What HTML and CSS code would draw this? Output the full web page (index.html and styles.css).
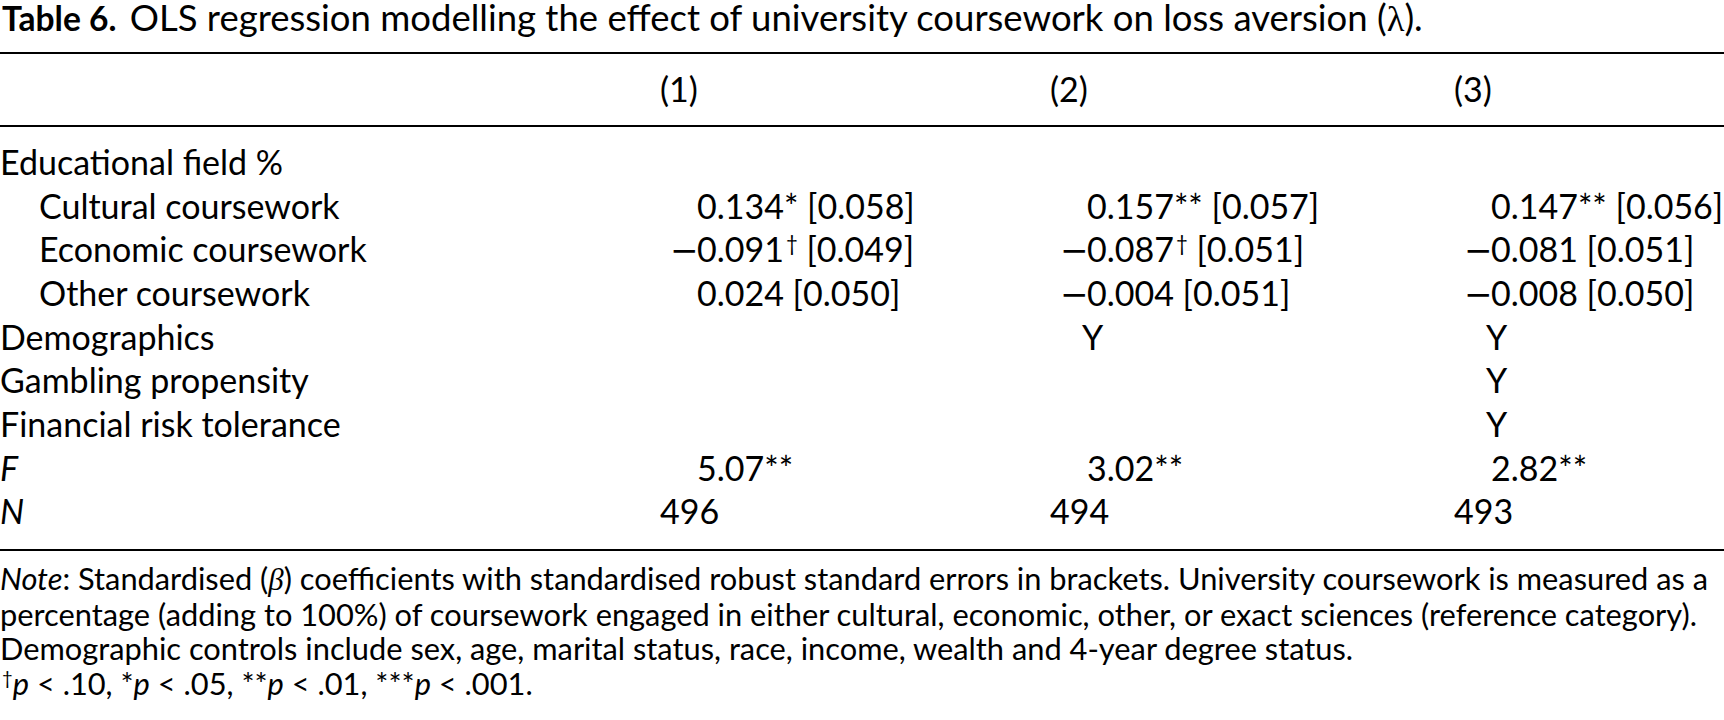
FILE: index.html
```html
<!DOCTYPE html>
<html lang="en">
<head>
<meta charset="utf-8">
<title>Table 6</title>
<link rel="stylesheet" href="styles.css">
</head>
<body>
<div class="caption"><b class="tno">Table 6.</b> OLS regression modelling the effect of university coursework on loss aversion (<span class="greek">λ</span>).</div>

<div class="table">
  <div class="row head">
    <div class="lab"></div>
    <div class="cell">(1)</div>
    <div class="cell">(2)</div>
    <div class="cell c3">(3)</div>
  </div>
  <div class="body">
    <div class="row">
      <div class="lab">Educational field %</div>
      <div class="cell"></div><div class="cell"></div><div class="cell c3"></div>
    </div>
    <div class="row">
      <div class="lab sub">Cultural coursework</div>
      <div class="cell num"><span class="sign"></span>0.134<span class="star">*</span> [0.058]</div>
      <div class="cell num"><span class="sign"></span>0.157<span class="star">**</span> [0.057]</div>
      <div class="cell num c3"><span class="sign"></span>0.147<span class="star">**</span> [0.056]</div>
    </div>
    <div class="row">
      <div class="lab sub">Economic coursework</div>
      <div class="cell num"><span class="sign"><span class="minus">−</span></span>0.091<sup class="dag">†</sup> [0.049]</div>
      <div class="cell num"><span class="sign"><span class="minus">−</span></span>0.087<sup class="dag">†</sup> [0.051]</div>
      <div class="cell num c3"><span class="sign"><span class="minus">−</span></span>0.081 [0.051]</div>
    </div>
    <div class="row">
      <div class="lab sub">Other coursework</div>
      <div class="cell num"><span class="sign"></span>0.024 [0.050]</div>
      <div class="cell num"><span class="sign"><span class="minus">−</span></span>0.004 [0.051]</div>
      <div class="cell num c3"><span class="sign"><span class="minus">−</span></span>0.008 [0.050]</div>
    </div>
    <div class="row">
      <div class="lab">Demographics</div>
      <div class="cell"></div>
      <div class="cell yes">Y</div>
      <div class="cell yes c3">Y</div>
    </div>
    <div class="row">
      <div class="lab">Gambling propensity</div>
      <div class="cell"></div>
      <div class="cell"></div>
      <div class="cell yes c3">Y</div>
    </div>
    <div class="row">
      <div class="lab">Financial risk tolerance</div>
      <div class="cell"></div>
      <div class="cell"></div>
      <div class="cell yes c3">Y</div>
    </div>
    <div class="row">
      <div class="lab"><i>F</i></div>
      <div class="cell num"><span class="sign"></span>5.07<span class="star">**</span></div>
      <div class="cell num"><span class="sign"></span>3.02<span class="star">**</span></div>
      <div class="cell num c3"><span class="sign"></span>2.82<span class="star">**</span></div>
    </div>
    <div class="row">
      <div class="lab"><i>N</i></div>
      <div class="cell">496</div>
      <div class="cell">494</div>
      <div class="cell c3">493</div>
    </div>
  </div>
</div>

<div class="notes">
  <p class="line"><i>Note</i>: Standardised (<i class="greek">β</i>) coefficients with standardised robust standard errors in brackets. University coursework is measured as a</p>
  <p class="line">percentage (adding to 100%) of coursework engaged in either cultural, economic, other, or exact sciences (reference category).</p>
  <p class="line">Demographic controls include sex, age, marital status, race, income, wealth and 4-year degree status.</p>
  <p class="line"><sup class="dag">†</sup><i>p</i> &lt; .10, <span class="star">*</span><i>p</i> &lt; .05, <span class="star">**</span><i>p</i> &lt; .01, <span class="star">***</span><i>p</i> &lt; .001.</p>
</div>
</body>
</html>
```
FILE: styles.css
```css
html, body {
  margin: 0;
  padding: 0;
  background: #ffffff;
  color: #000000;
}

body {
  font-family: "Lato", "Noto Sans", sans-serif;
  font-size: 34px;
  width: 1724px;
  overflow: hidden;
}

.caption {
  font-size: 36.5px;
  line-height: 34px;
  padding: 0 0 16px 2px;
  white-space: nowrap;
}

.tno {
  font-weight: 700;
  font-size: 0.92em;
  margin-right: 4px;
}

.greek {
  font-family: "Liberation Serif", "DejaVu Serif", serif;
}

.table {
  border-top: 2px solid #000;
  border-bottom: 2px solid #000;
}

.row {
  display: grid;
  grid-template-columns: 660px 390px 404px 1fr;
  line-height: 43.7px;
  height: 43.7px;
  white-space: nowrap;
}

.head {
  padding: 13px 0 14px;
  border-bottom: 2px solid #000;
}

.body {
  padding: 13.3px 0 15.7px;
}

.lab.sub {
  padding-left: 39px;
}

.cell.num {
  padding-left: 13px;
}

.cell.yes {
  padding-left: 32px;
}

.sign {
  display: inline-block;
  width: 24px;
  overflow: visible;
}

.minus {
  font-family: "DejaVu Sans", sans-serif;
  margin-left: -3px;
}

.star {
  font-size: 1em;
}

.dag {
  font-size: 0.6em;
  vertical-align: 0.55em;
  line-height: 0;
  margin-left: 2px;
}

.notes {
  font-size: 30.8px;
  padding-top: 11px;
}

.line {
  margin: 0;
  line-height: 34.8px;
  white-space: nowrap;
}
```
